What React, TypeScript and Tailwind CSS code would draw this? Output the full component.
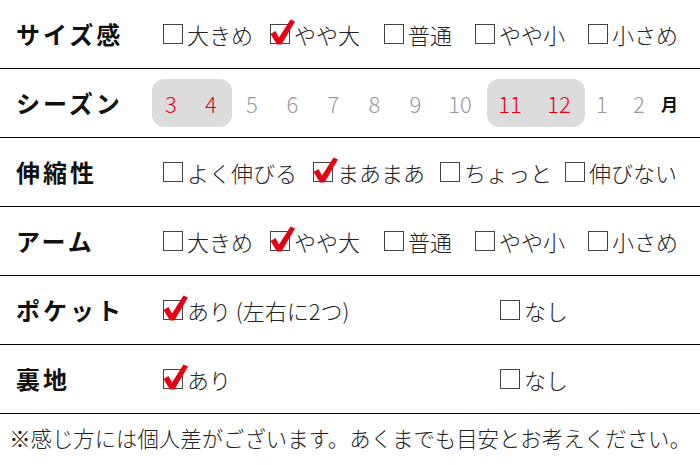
import React from "react";

type Opt = { label: string; checked?: boolean; w: string };

const Box = ({ checked }: { checked?: boolean }) => (
  <span className="relative inline-block w-[20px] h-[20px] shrink-0 border border-[#444] bg-white">
    {checked && (
      <svg
        className="absolute left-[-2px] top-[-7px]"
        width="28"
        height="28"
        viewBox="0 0 28 28"
      >
        {/* brush check */}
        <path
          d="M1.5 16 L6.5 13 L10 19.5 L21.5 1.5 L26 3.5 L12.5 26.5 L8 26.5 Z"
          fill="#e60012"
        />
      </svg>
    )}
  </span>
);

const Option = ({ label, checked, w }: Opt) => (
  <div className={`flex items-center shrink-0 ${w}`}>
    <Box checked={checked} />
    <span className="ml-[4px] text-[22px] font-light leading-none text-[#222] whitespace-nowrap">
      {label}
    </span>
  </div>
);

const Label = ({ children }: { children: React.ReactNode }) => (
  <div className="w-[163px] shrink-0 pl-4 text-[24px] font-bold tracking-[3px] text-[#111] leading-none">
    {children}
  </div>
);

const Row = ({ children }: { children: React.ReactNode }) => (
  <div className="flex items-center h-[69px] border-b border-black">{children}</div>
);

const SIZE: Opt[] = [
  { label: "大きめ", w: "w-[107px]" },
  { label: "やや大", checked: true, w: "w-[114px]" },
  { label: "普通", w: "w-[91px]" },
  { label: "やや小", w: "w-[113px]" },
  { label: "小さめ", w: "w-[100px]" },
];

const STRETCH: Opt[] = [
  { label: "よく伸びる", w: "w-[150px]" },
  { label: "まあまあ", checked: true, w: "w-[127px]" },
  { label: "ちょっと", w: "w-[125px]" },
  { label: "伸びない", w: "w-[120px]" },
];

const Num = ({ n, on, w }: { n: string; on?: boolean; w: string }) => (
  <span className={`${w} text-center text-[22px] font-light leading-none ${on ? "text-[#e60012]" : "text-[#999]"}`}>
    {n}
  </span>
);

export default function App() {
  return (
    <div
      className="w-[700px] h-[465px] bg-white overflow-hidden"
      style={{ fontFamily: '"Noto Sans CJK JP", "Noto Sans", sans-serif' }}
    >
      <Row>
        <Label>サイズ感</Label>
        {SIZE.map((o) => (
          <Option key={o.label} {...o} />
        ))}
      </Row>

      <Row>
        <div className="w-[152px] shrink-0 pl-4 text-[24px] font-bold tracking-[3px] text-[#111] leading-none">
          シーズン
        </div>
        <div className="flex items-center">
          <div className="flex items-center h-[48px] w-[80px] rounded-[12px] bg-[#dcdcdc]">
            <Num n="3" on w="w-[38px]" />
            <Num n="4" on w="w-[42px]" />
          </div>
          <Num n="5" w="w-[40px]" />
          <Num n="6" w="w-[41px]" />
          <Num n="7" w="w-[41px]" />
          <Num n="8" w="w-[41px]" />
          <Num n="9" w="w-[41px]" />
          <Num n="10" w="w-[48px]" />
          <div className="ml-[3px] flex items-center h-[48px] w-[98px] rounded-[12px] bg-[#dcdcdc]">
            <Num n="11" on w="w-[46px]" />
            <Num n="12" on w="w-[52px]" />
          </div>
          <Num n="1" w="w-[34px]" />
          <Num n="2" w="w-[40px]" />
          <span className="ml-[2px] text-[17px] font-bold text-[#111] leading-none">月</span>
        </div>
      </Row>

      <Row>
        <Label>伸縮性</Label>
        {STRETCH.map((o) => (
          <Option key={o.label} {...o} />
        ))}
      </Row>

      <Row>
        <Label>アーム</Label>
        {SIZE.map((o) => (
          <Option key={o.label} {...o} />
        ))}
      </Row>

      <Row>
        <Label>ポケット</Label>
        <Option label="あり (左右に2つ)" checked w="w-[337px]" />
        <Option label="なし" w="w-[100px]" />
      </Row>

      <Row>
        <Label>裏地</Label>
        <Option label="あり" checked w="w-[337px]" />
        <Option label="なし" w="w-[100px]" />
      </Row>

      <p className="pt-[9px] text-center text-[21.4px] font-light leading-[30px] text-[#222] whitespace-nowrap">
        ※感じ方には個人差がございます。あくまでも目安とお考えください。
      </p>
    </div>
  );
}
